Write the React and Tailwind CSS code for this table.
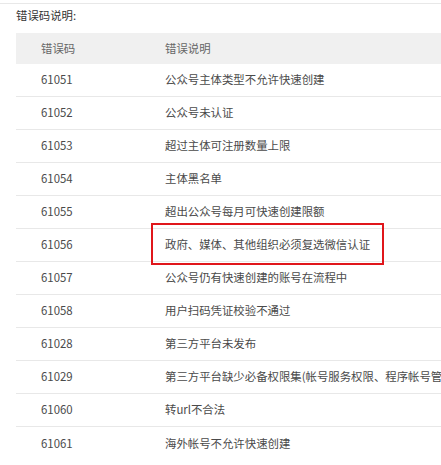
import React from "react";

const rows = [
  ["61051", "公众号主体类型不允许快速创建"],
  ["61052", "公众号未认证"],
  ["61053", "超过主体可注册数量上限"],
  ["61054", "主体黑名单"],
  ["61055", "超出公众号每月可快速创建限额"],
  ["61056", "政府、媒体、其他组织必须复选微信认证"],
  ["61057", "公众号仍有快速创建的账号在流程中"],
  ["61058", "用户扫码凭证校验不通过"],
  ["61028", "第三方平台未发布"],
  ["61029", "第三方平台缺少必备权限集(帐号服务权限、程序帐号管理权限)"],
  ["61060", "转url不合法"],
  ["61061", "海外帐号不允许快速创建"],
];

export default function App() {
  return (
    <div
      className="relative w-[441px] h-[465px] overflow-hidden bg-white text-[11.4px] text-[#4a4a4a]"
      style={{ fontFamily: '"Noto Sans CJK SC", "Noto Sans", sans-serif' }}
    >
      <div className="mt-[3px] h-px bg-[#e8e8e8]" />
      <div className="h-[29px] pl-4 leading-[22px] text-[#333]">错误码说明:</div>
      <div className="ml-4">
        <div className="flex h-[31px] items-center bg-[#f0f0f0] text-[#666]">
          <div className="w-[149px] shrink-0 pl-[25px]">错误码</div>
          <div className="whitespace-nowrap">错误说明</div>
        </div>
        {rows.map(([code, desc], i) => (
          <div
            key={code}
            className={`flex h-[33px] items-center ${i < rows.length - 1 ? "border-b border-[#e8e8e8]" : ""}`}
          >
            <div className="w-[149px] shrink-0 pl-[25px]">{code}</div>
            <div className="whitespace-nowrap">{desc}</div>
          </div>
        ))}
      </div>
      <div className="absolute left-[151px] top-[223px] w-[233px] h-[42px] border-2 border-[#e0161b]" />
    </div>
  );
}
